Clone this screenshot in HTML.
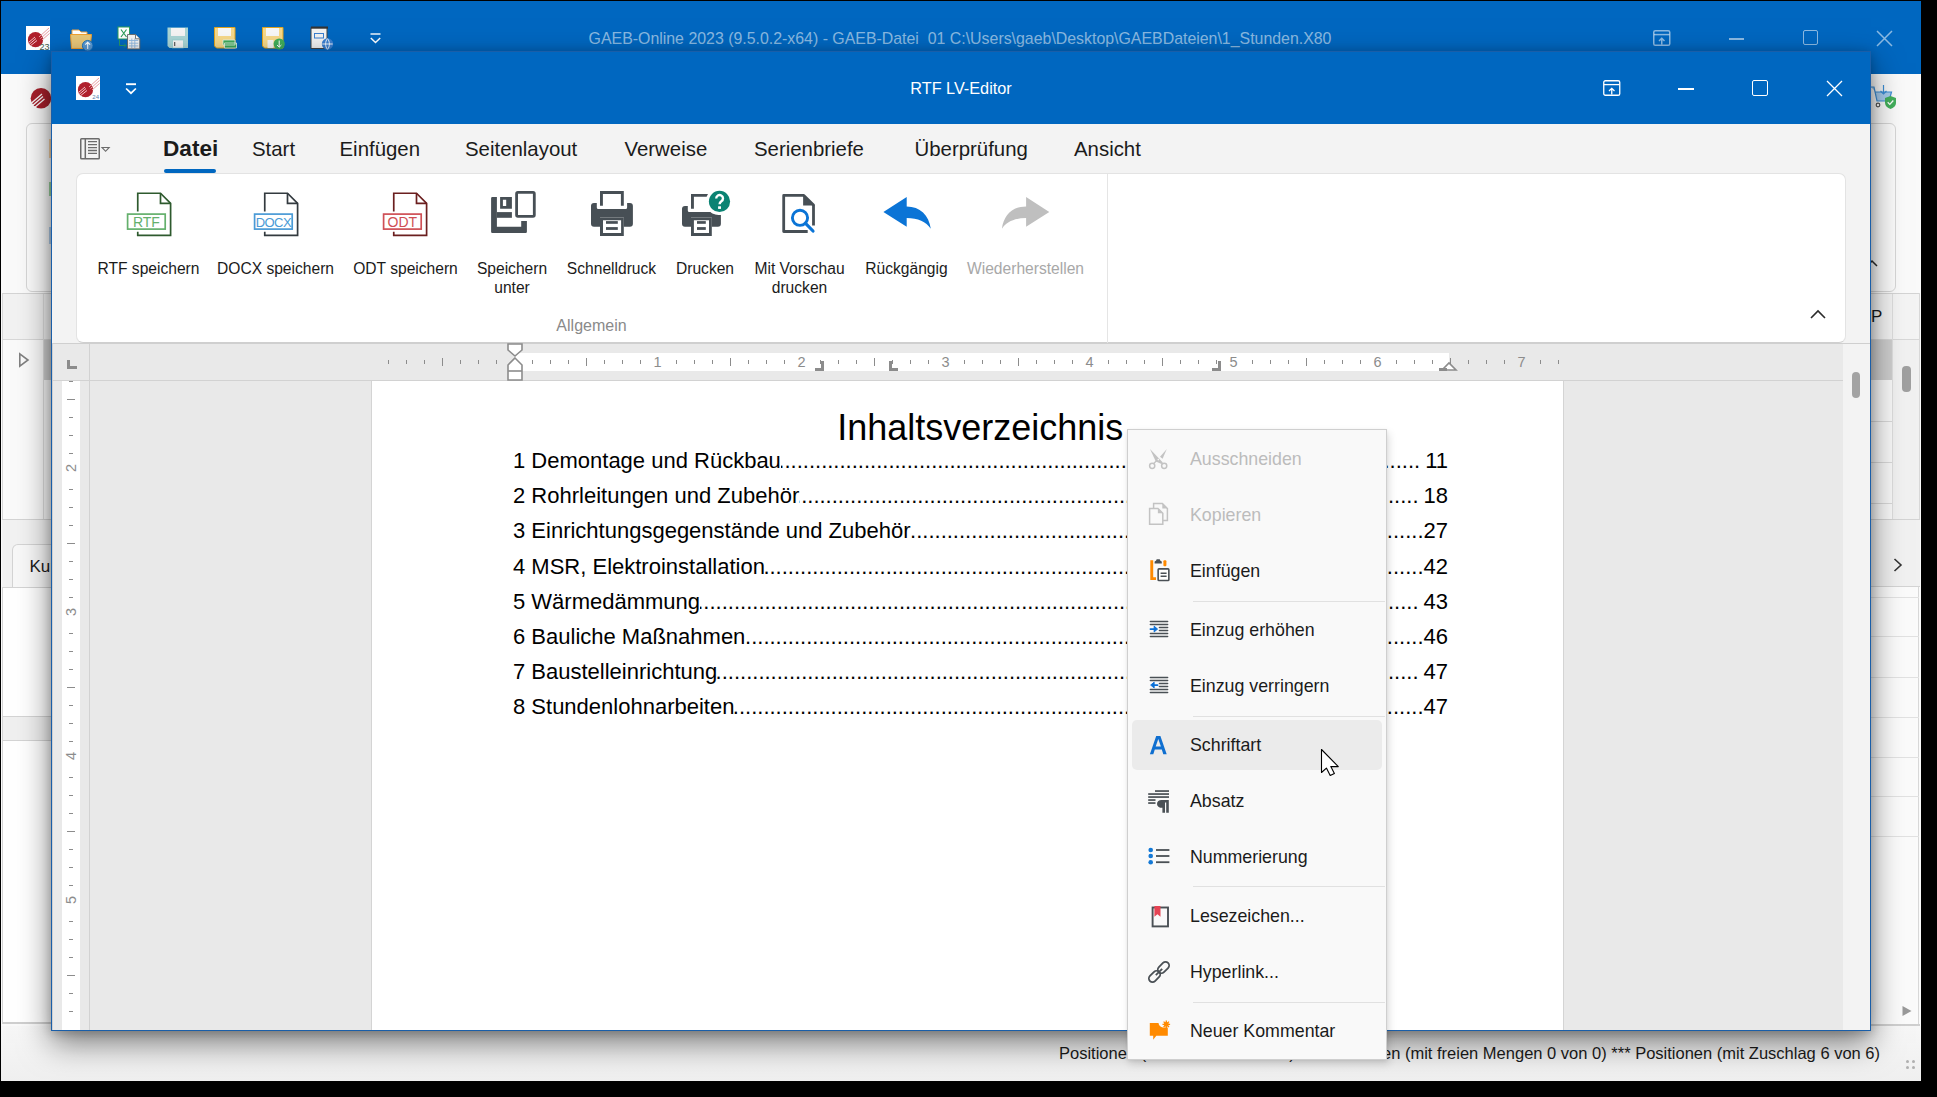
<!DOCTYPE html>
<html><head><meta charset="utf-8">
<style>
*{box-sizing:border-box}
html,body{margin:0;padding:0}
body{width:1937px;height:1097px;background:#000;position:relative;overflow:hidden;font-family:"Liberation Sans",sans-serif;color:#1b1b1b}
.a{position:absolute}
.t{position:absolute;white-space:nowrap}
svg{overflow:visible}
</style></head><body>
<div class="a" style="left:1px;top:1px;width:1920px;height:1080px;background:#fafafa"></div>
<div class="a" style="left:1px;top:1px;width:1920px;height:73px;background:#0067c0"></div>
<div class="t" style="left:810.7px;top:30.54px;font-size:15.9px;line-height:15.9px;color:rgba(255,255,255,0.55);width:300px;text-align:center;width:900px;left:510px">GAEB-Online 2023 (9.5.0.2-x64) - GAEB-Datei  01 C:\Users\gaeb\Desktop\GAEBDateien\1_Stunden.X80</div>
<svg class="a" style="left:26px;top:26px;" width="24" height="24" viewBox="0 0 24 24"><rect width="24" height="24" fill="#fff"/><circle cx="9.5" cy="13.7" r="7.6" fill="#b0202c"/><path d="M13 11L23 2M14.5 12.5L23.5 4.5M16 14L23.5 7.5" stroke="#e8a0a6" stroke-width="1"/><path d="M2.5 16.5L9 11M3 18.5L10 12.5M4.5 19.7L11 14.5" stroke="#f1c4c8" stroke-width="1"/><text x="23.5" y="23.5" text-anchor="end" font-family="Liberation Sans" font-size="9" fill="#3e5a4a">23</text></svg>
<svg class="a" style="left:69px;top:27px;" width="26" height="24" viewBox="0 0 26 24"><path d="M3 3H10L12 5H18V9H3Z" fill="#fff" stroke="#e9a34a" stroke-width="1"/><path d="M1.5 7.5H22.5L21 21.5H2.5Z" fill="#e8c77a" stroke="#f0a030" stroke-width="1"/><circle cx="18.7" cy="18.7" r="5.3" fill="#5b9bd5" stroke="#0067c0" stroke-width="0.8"/><path d="M18.7 22V15.3M16.3 17.7L18.7 15.3L21.1 17.7" fill="none" stroke="#fff" stroke-width="1.1"/></svg>
<svg class="a" style="left:117px;top:26px;" width="26" height="26" viewBox="0 0 26 26"><rect x="1" y="1" width="11.5" height="12" fill="#fff" stroke="#2e9e5a" stroke-width="1"/><path d="M4 3.5L9.5 11M9.5 3.5L4 11" stroke="#2e9e5a" stroke-width="1.2"/><path d="M10.5 8.5H18.5L22.8 12.8V22.9H10.5Z" fill="#f4f4f4" stroke="#666" stroke-width="0.9"/><path d="M18.5 8.5V12.8H22.8" fill="#fff" stroke="#555" stroke-width="0.8"/><path d="M12 14.5H21.3M12 17.2H21.3M12 19.9H21.3M14.8 12.5V22M17.8 12.5V22" stroke="#8fb8e0" stroke-width="0.9"/><path d="M2.5 13.5V19.5H8.5M7 17.5L9 19.5L7 21.5" fill="none" stroke="#2e9e5a" stroke-width="0.9"/></svg>
<svg class="a" style="left:167px;top:27px;" width="22" height="22" viewBox="0 0 22 22"><path d="M0.5 0.5H21V21L19 21H2.5L0.5 19Z" fill="#a9d5d5"/><rect x="4" y="1" width="14" height="8" fill="#f4f4f4"/><rect x="5.5" y="13" width="11" height="8" fill="#f4f4f4" stroke="#8cc" stroke-width="0.6"/><rect x="7" y="15" width="1.3" height="4" fill="#666"/></svg>
<svg class="a" style="left:214px;top:27px;" width="24" height="23" viewBox="0 0 24 23"><path d="M0.5 0.5H21V21L19 21H2.5L0.5 19Z" fill="#f7d98a" stroke="#e0a420" stroke-width="1"/><rect x="4" y="1" width="13" height="8" fill="#f8f8f8"/><path d="M9 13H21V18H9Z M10.5 16H22.5V21H10.5Z" fill="#3fa95a" stroke="#e8f8e8" stroke-width="0.8"/></svg>
<svg class="a" style="left:262px;top:27px;" width="24" height="23" viewBox="0 0 24 23"><path d="M0.5 0.5H21V21L19 21H2.5L0.5 19Z" fill="#f7d98a" stroke="#e0a420" stroke-width="1"/><rect x="4" y="1" width="13" height="8" fill="#f8f8f8"/><rect x="5.5" y="13" width="6" height="8" fill="#f4f4f4"/><circle cx="17.2" cy="17" r="5.6" fill="#3fae5a"/><path d="M17.2 13.5V20.2M15 18L17.2 20.2L19.4 18" fill="none" stroke="#fff" stroke-width="1"/></svg>
<svg class="a" style="left:310px;top:26px;" width="24" height="24" viewBox="0 0 24 24"><path d="M1 1.5H17V22.5H1Z" fill="#f2f2f2" stroke="#444" stroke-width="1"/><rect x="1" y="0.5" width="17" height="2.2" fill="#333"/><rect x="4.5" y="7.5" width="9" height="4.5" fill="none" stroke="#3a7fd0" stroke-width="1"/><circle cx="17.5" cy="18" r="5.7" fill="#3a7fd0"/><path d="M12.3 18H22.7M17.5 12.7C15 15 15 21 17.5 23.3C20 21 20 15 17.5 12.7Z" fill="none" stroke="#fff" stroke-width="0.9"/></svg>
<svg class="a" style="left:370px;top:33px;" width="11" height="11" viewBox="0 0 11 11"><path d="M0.5 1H10.5" stroke="#fff" stroke-width="1.4"/><path d="M0.8 5L5.5 9.5L10.2 5" fill="none" stroke="#fff" stroke-width="1.5"/></svg>
<svg class="a" style="left:1652.5px;top:30px;" width="18" height="16" viewBox="0 0 18 16"><rect x="0.75" y="0.75" width="16" height="14.5" rx="1.6" fill="none" stroke="rgba(255,255,255,0.55)" stroke-width="1.5"/><line x1="1" y1="4.6" x2="16.5" y2="4.6" stroke="rgba(255,255,255,0.55)" stroke-width="1.5"/><path d="M8.75 14.5V8.3M6 11L8.75 8.3L11.5 11" fill="none" stroke="rgba(255,255,255,0.55)" stroke-width="1.5"/></svg>
<div class="a" style="left:1729px;top:38px;width:15px;height:1.5px;background:rgba(255,255,255,0.55)"></div>
<div class="a" style="left:1803px;top:30px;width:15px;height:15px;border:1.5px solid rgba(255,255,255,0.55);border-radius:2px"></div>
<svg class="a" style="left:1876px;top:30px;" width="17" height="17" viewBox="0 0 17 17"><path d="M1 1L16 16M16 1L1 16" stroke="rgba(255,255,255,0.55)" stroke-width="1.5"/></svg>
<div class="a" style="left:1px;top:1026px;width:1920px;height:55px;background:linear-gradient(#f7f7f7,#efefef)"></div>
<div class="a" style="left:26px;top:123px;width:60px;height:169px;background:#fbfbfb;border:1px solid #d6d6d6;border-radius:6px"></div>
<svg class="a" style="left:30px;top:85px;" width="22" height="26" viewBox="0 0 22 26"><circle cx="11" cy="13.3" r="10.3" fill="#a8202c"/><path d="M1.5 18L12 9M2.5 20.5L13 11.5M4.5 22.5L14.5 14" stroke="#fff" stroke-width="1.3"/></svg>
<div class="a" style="left:49px;top:139px;width:2px;height:19px;background:#f0b060;opacity:.55"></div>
<div class="a" style="left:49px;top:182px;width:2px;height:14px;background:#5cb860;opacity:.6"></div>
<div class="a" style="left:49px;top:227px;width:2px;height:17px;background:#5a9ad8;opacity:.45"></div>
<div class="a" style="left:2px;top:293px;width:60px;height:1px;background:#d4d4d4"></div>
<div class="a" style="left:2px;top:294px;width:60px;height:45px;background:#f2f2f2"></div>
<div class="a" style="left:2px;top:339px;width:60px;height:1px;background:#d8d8d8"></div>
<div class="a" style="left:43px;top:294px;width:1px;height:225px;background:#dedede"></div>
<div class="a" style="left:44px;top:340px;width:10px;height:40px;background:#d0d0d0"></div>
<div class="a" style="left:2px;top:519px;width:60px;height:1px;background:#d4d4d4"></div>
<div class="a" style="left:2px;top:294px;width:1px;height:225px;background:#d8d8d8"></div>
<svg class="a" style="left:18px;top:352px;" width="12" height="16" viewBox="0 0 12 16"><path d="M1.8 1.8L10 8L1.8 14.2Z" fill="none" stroke="#808080" stroke-width="1.6"/></svg>
<div class="a" style="left:2px;top:520px;width:60px;height:67px;background:#f2f2f2"></div>
<div class="a" style="left:12px;top:544px;width:60px;height:43px;background:#f8f8f8;border:1px solid #d4d4d4;border-bottom:none;border-radius:6px 6px 0 0"></div>
<div class="t" style="left:29.5px;top:557.61px;font-size:17px;line-height:17px;color:#1b1b1b;">Kur</div>
<div class="a" style="left:2px;top:587px;width:60px;height:129px;background:#fff;border-left:1px solid #d4d4d4;border-top:1px solid #d4d4d4"></div>
<div class="a" style="left:2px;top:716px;width:60px;height:25px;background:#f0f0f0;border-top:1px solid #d4d4d4;border-bottom:1px solid #d4d4d4;border-left:1px solid #d4d4d4"></div>
<div class="a" style="left:2px;top:741px;width:60px;height:283px;background:#fff;border-left:1px solid #d4d4d4;border-bottom:2px solid #cfcfcf"></div>
<svg class="a" style="left:1870px;top:84px;" width="28" height="28" viewBox="0 0 28 28"><path d="M1 3H4L7 17H19L21.5 8H5.5" fill="#a8cdee" stroke="#3d8fd6" stroke-width="1.2"/><circle cx="8" cy="21" r="1.8" fill="none" stroke="#555" stroke-width="1.2"/><path d="M13.5 1V10M10.5 7L13.5 10L16.5 7" fill="none" stroke="#3d8fd6" stroke-width="1.2"/><path d="M20.5 12L26 14V19C26 22 23.5 24 20.5 25C17.5 24 15 22 15 19V14Z" fill="#43b05c"/><path d="M17.7 18.3L19.8 20.4L23.3 16.5" fill="none" stroke="#fff" stroke-width="1.3"/></svg>
<div class="a" style="left:1840px;top:123px;width:56px;height:169px;background:#fbfbfb;border:1px solid #d6d6d6;border-radius:6px"></div>
<svg class="a" style="left:1866px;top:258px;" width="12" height="10" viewBox="0 0 12 10"><path d="M1 8L6 3L11 8" fill="none" stroke="#2b2b2b" stroke-width="1.5"/></svg>
<div class="a" style="left:1840px;top:293px;width:80px;height:1px;background:#d4d4d4"></div>
<div class="a" style="left:1840px;top:294px;width:79px;height:45px;background:#f4f4f4"></div>
<div class="a" style="left:1840px;top:339px;width:79px;height:1px;background:#d8d8d8"></div>
<div class="a" style="left:1892px;top:294px;width:1px;height:225px;background:#dedede"></div>
<div class="a" style="left:1919px;top:293px;width:1px;height:226px;background:#d8d8d8"></div>
<div class="a" style="left:1860px;top:340px;width:32px;height:40px;background:#cfcfcf"></div>
<div class="t" style="left:1871px;top:307.61px;font-size:17px;line-height:17px;color:#1b1b1b;">P</div>
<div class="a" style="left:1893px;top:340px;width:26px;height:179px;background:#f1f1f1"></div>
<div class="a" style="left:1902px;top:366px;width:9px;height:26px;background:#a0a0a0;border-radius:4px"></div>
<div class="a" style="left:1860px;top:421px;width:32px;height:1px;background:#dadada"></div>
<div class="a" style="left:1860px;top:462px;width:32px;height:1px;background:#dadada"></div>
<div class="a" style="left:1860px;top:503px;width:32px;height:1px;background:#dadada"></div>
<div class="a" style="left:1840px;top:519px;width:80px;height:1px;background:#d4d4d4"></div>
<div class="a" style="left:1840px;top:520px;width:80px;height:66px;background:#f1f1f1"></div>
<svg class="a" style="left:1893px;top:558px;" width="10" height="14" viewBox="0 0 10 14"><path d="M1.5 1L8 7L1.5 13" fill="none" stroke="#333" stroke-width="1.6"/></svg>
<div class="a" style="left:1840px;top:586px;width:80px;height:1px;background:#d4d4d4"></div>
<div class="a" style="left:1840px;top:587px;width:79px;height:437px;background:#fbfbfb;border-right:1px solid #d8d8d8"></div>
<div class="a" style="left:1860px;top:597px;width:59px;height:1px;background:#e2e2e2"></div>
<div class="a" style="left:1860px;top:636px;width:59px;height:1px;background:#e2e2e2"></div>
<div class="a" style="left:1860px;top:677px;width:59px;height:1px;background:#e2e2e2"></div>
<div class="a" style="left:1860px;top:717px;width:59px;height:1px;background:#e2e2e2"></div>
<div class="a" style="left:1860px;top:757px;width:59px;height:1px;background:#e2e2e2"></div>
<div class="a" style="left:1860px;top:796px;width:59px;height:1px;background:#e2e2e2"></div>
<div class="a" style="left:1860px;top:836px;width:59px;height:1px;background:#e2e2e2"></div>
<svg class="a" style="left:1901px;top:1005px;" width="12" height="12" viewBox="0 0 12 12"><path d="M1.5 1L10.5 6L1.5 11Z" fill="#9a9a9a"/></svg>
<div class="a" style="left:1840px;top:1024px;width:80px;height:2px;background:#cfcfcf"></div>
<div class="a" style="left:1905.5px;top:1059.5px;width:3px;height:3px;background:#b0b0b0;border-radius:50%"></div>
<div class="a" style="left:1905.5px;top:1065.5px;width:3px;height:3px;background:#b0b0b0;border-radius:50%"></div>
<div class="a" style="left:1911.5px;top:1059.5px;width:3px;height:3px;background:#b0b0b0;border-radius:50%"></div>
<div class="a" style="left:1911.5px;top:1065.5px;width:3px;height:3px;background:#b0b0b0;border-radius:50%"></div>
<div class="t" style="left:1059px;top:1045.03px;font-size:16.5px;line-height:16.5px;color:#1b1b1b;">Positionen (mit</div>
<div class="t" style="left:1180px;top:1045.03px;font-size:16.5px;line-height:16.5px;color:#1b1b1b;width:700px;height:22px;display:flex;justify-content:flex-end;overflow:hidden"><span>6 von 6) *** Positionen (mit freien Mengen 0 von 0) *** Positionen (mit Zuschlag 6 von 6)</span></div>
<div class="a" style="left:51px;top:51px;width:1820px;height:980px;background:#f3f3f3;border:1px solid #1a5ea8;box-shadow:0 12px 30px rgba(0,0,0,.5),0 2px 10px rgba(0,0,0,.2)"></div>
<div class="a" style="left:52px;top:52px;width:1818px;height:72px;background:#0067c0"></div>
<div class="t" style="left:811.0px;top:79.84px;font-size:16.25px;line-height:16.25px;color:#ffffff;width:300px;text-align:center;">RTF LV-Editor</div>
<svg class="a" style="left:76px;top:76px;" width="24" height="24" viewBox="0 0 24 24"><rect width="24" height="24" fill="#fff"/><circle cx="9.5" cy="13.7" r="7.6" fill="#b0202c"/><path d="M13 11L23 2M14.5 12.5L23.5 4.5M16 14L23.5 7.5" stroke="#e8a0a6" stroke-width="1"/><path d="M2.5 16.5L9 11M3 18.5L10 12.5M4.5 19.7L11 14.5" stroke="#f1c4c8" stroke-width="1"/><text x="23" y="23" text-anchor="end" font-family="Liberation Sans" font-size="6" fill="#5a7fae">24</text></svg>
<svg class="a" style="left:125px;top:82px;" width="12" height="13" viewBox="0 0 12 13"><path d="M1 2.2H11" stroke="#fff" stroke-width="1.9"/><path d="M1.1 6.5L6 11.2L10.9 6.5" fill="none" stroke="#fff" stroke-width="1.7"/></svg>
<svg class="a" style="left:1602.5px;top:80px;" width="18" height="16" viewBox="0 0 18 16"><rect x="0.75" y="0.75" width="16" height="14.5" rx="1.6" fill="none" stroke="#ffffff" stroke-width="1.3"/><line x1="1" y1="4.6" x2="16.5" y2="4.6" stroke="#ffffff" stroke-width="1.3"/><path d="M8.75 14.5V8.3M6 11L8.75 8.3L11.5 11" fill="none" stroke="#ffffff" stroke-width="1.3"/></svg>
<div class="a" style="left:1678px;top:88px;width:16px;height:1.5px;background:#ffffff"></div>
<div class="a" style="left:1752px;top:80px;width:16px;height:16px;border:1.3px solid #ffffff;border-radius:2px"></div>
<svg class="a" style="left:1826px;top:80px;" width="17" height="17" viewBox="0 0 17 17"><path d="M1 1L16 16M16 1L1 16" stroke="#ffffff" stroke-width="1.3"/></svg>
<div class="t" style="left:163px;top:137.87px;font-size:22.6px;line-height:22.6px;color:#1b1b1b;font-weight:bold;">Datei</div>
<div class="t" style="left:252px;top:139.13px;font-size:20.4px;line-height:20.4px;color:#1b1b1b;">Start</div>
<div class="t" style="left:339.5px;top:139.13px;font-size:20.4px;line-height:20.4px;color:#1b1b1b;">Einfügen</div>
<div class="t" style="left:465px;top:139.13px;font-size:20.4px;line-height:20.4px;color:#1b1b1b;">Seitenlayout</div>
<div class="t" style="left:624.5px;top:139.13px;font-size:20.4px;line-height:20.4px;color:#1b1b1b;">Verweise</div>
<div class="t" style="left:754px;top:139.13px;font-size:20.4px;line-height:20.4px;color:#1b1b1b;">Serienbriefe</div>
<div class="t" style="left:914.5px;top:139.13px;font-size:20.4px;line-height:20.4px;color:#1b1b1b;">Überprüfung</div>
<div class="t" style="left:1074px;top:139.13px;font-size:20.4px;line-height:20.4px;color:#1b1b1b;">Ansicht</div>
<div class="a" style="left:163.5px;top:169px;width:52.5px;height:4px;background:#0067c0;border-radius:2px"></div>
<div class="a" style="left:76px;top:173px;width:1770px;height:170px;background:#fff;border:1px solid #e3e3e3;border-radius:7px;border-bottom:1px solid #cfcfcf"></div>
<div class="a" style="left:1107px;top:174px;width:1px;height:169px;background:#e5e5e5"></div>
<div class="t" style="left:441.5px;top:318.46px;font-size:16px;line-height:16px;color:#8a8a8a;width:300px;text-align:center;">Allgemein</div>
<div class="t" style="left:-1.5px;top:260.79px;font-size:15.6px;line-height:15.6px;color:#1b1b1b;width:300px;text-align:center;">RTF speichern</div>
<div class="t" style="left:125.5px;top:260.79px;font-size:15.6px;line-height:15.6px;color:#1b1b1b;width:300px;text-align:center;">DOCX speichern</div>
<div class="t" style="left:255.5px;top:260.79px;font-size:15.6px;line-height:15.6px;color:#1b1b1b;width:300px;text-align:center;">ODT speichern</div>
<div class="t" style="left:362.0px;top:260.79px;font-size:15.6px;line-height:15.6px;color:#1b1b1b;width:300px;text-align:center;">Speichern</div>
<div class="t" style="left:362.0px;top:279.79px;font-size:15.6px;line-height:15.6px;color:#1b1b1b;width:300px;text-align:center;">unter</div>
<div class="t" style="left:461.5px;top:260.79px;font-size:15.6px;line-height:15.6px;color:#1b1b1b;width:300px;text-align:center;">Schnelldruck</div>
<div class="t" style="left:555.0px;top:260.79px;font-size:15.6px;line-height:15.6px;color:#1b1b1b;width:300px;text-align:center;">Drucken</div>
<div class="t" style="left:649.5px;top:260.79px;font-size:15.6px;line-height:15.6px;color:#1b1b1b;width:300px;text-align:center;">Mit Vorschau</div>
<div class="t" style="left:649.5px;top:279.79px;font-size:15.6px;line-height:15.6px;color:#1b1b1b;width:300px;text-align:center;">drucken</div>
<div class="t" style="left:756.5px;top:260.79px;font-size:15.6px;line-height:15.6px;color:#1b1b1b;width:300px;text-align:center;">Rückgängig</div>
<div class="t" style="left:875.5px;top:260.79px;font-size:15.6px;line-height:15.6px;color:#a8a8a8;width:300px;text-align:center;">Wiederherstellen</div>
<svg class="a" style="left:120.5px;top:185px;" width="52" height="52" viewBox="0 0 52 52"><path d="M16.75 26.5V8.25H39.5L49.6 18.4V50.4H16.75V46.8" fill="none" stroke="#2e5a2e" stroke-width="1.7" stroke-linejoin="miter"/><path d="M39.5 8.25V18.4H49.6" fill="none" stroke="#2e5a2e" stroke-width="1.7"/><rect x="6.6" y="29.1" width="37.6" height="15" fill="#fff" stroke="#64b06c" stroke-width="1.7"/><text x="25.4" y="41.5" text-anchor="middle" font-family="Liberation Sans" font-size="14" fill="#64b06c" letter-spacing="0">RTF</text></svg>
<svg class="a" style="left:247.5px;top:185px;" width="52" height="52" viewBox="0 0 52 52"><path d="M16.75 26.5V8.25H39.5L49.6 18.4V50.4H16.75V46.8" fill="none" stroke="#333a3f" stroke-width="1.7" stroke-linejoin="miter"/><path d="M39.5 8.25V18.4H49.6" fill="none" stroke="#333a3f" stroke-width="1.7"/><rect x="6.6" y="29.1" width="37.6" height="15" fill="#fff" stroke="#4a9ad6" stroke-width="1.7"/><text x="25.4" y="41.5" text-anchor="middle" font-family="Liberation Sans" font-size="13" fill="#4a9ad6" letter-spacing="-0.6">DOCX</text></svg>
<svg class="a" style="left:376.5px;top:185px;" width="52" height="52" viewBox="0 0 52 52"><path d="M16.75 26.5V8.25H39.5L49.6 18.4V50.4H16.75V46.8" fill="none" stroke="#6b1f1f" stroke-width="1.7" stroke-linejoin="miter"/><path d="M39.5 8.25V18.4H49.6" fill="none" stroke="#6b1f1f" stroke-width="1.7"/><rect x="6.6" y="29.1" width="37.6" height="15" fill="#fff" stroke="#cf4f55" stroke-width="1.7"/><text x="25.4" y="41.5" text-anchor="middle" font-family="Liberation Sans" font-size="14" fill="#cf4f55" letter-spacing="0">ODT</text></svg>
<svg class="a" style="left:484px;top:185px;" width="52" height="52" viewBox="0 0 52 52"><path d="M7.1 13.2a1.2 1.2 0 0 1 1.2-1.2H12.9V41.8H37.2V36.1H42.9V46.7a1.2 1.2 0 0 1-1.2 1.2H8.3a1.2 1.2 0 0 1-1.2-1.2Z" fill="#474f55"/><rect x="12.9" y="27.1" width="15" height="5.7" fill="#474f55"/><path d="M16.1 12H27.9V23.8H16.1Z M18.9 14.8V21.1H22.2V14.8Z" fill="#474f55" fill-rule="evenodd"/><rect x="32.6" y="7.4" width="17.7" height="24" rx="1.3" fill="none" stroke="#474f55" stroke-width="2.8"/></svg>
<svg class="a" style="left:582px;top:185px;" width="52" height="52" viewBox="0 0 52 52"><path d="M18 20.8V6H41.8V20.8H38.9V8.9H20.9V20.8Z" fill="#474f55"/><path d="M12 18H14.8V22.5a1.5 1.5 0 0 0 1.5 1.5H43.6a1.5 1.5 0 0 0 1.5-1.5V18H47.9a3 3 0 0 1 3 3V38.8a3 3 0 0 1-3 3H41.8V32.5H18V41.8H12a3 3 0 0 1-3-3V21a3 3 0 0 1 3-3Z" fill="#474f55"/><path d="M18 32.5H41.8V50.9H18Z M21 35.3V48.1H39.1V35.3Z" fill="#474f55" fill-rule="evenodd"/><rect x="24" y="36.1" width="11.8" height="2.7" fill="#474f55"/><rect x="24" y="42.1" width="11.8" height="2.8" fill="#474f55"/></svg>
<svg class="a" style="left:676px;top:185px;" width="52" height="52" viewBox="0 0 52 52"><path d="M15 23.8V9H32L30.6 11.8H17.9V23.8Z" fill="#474f55"/><path d="M9 21H11.8V25.5a1.5 1.5 0 0 0 1.5 1.5H34.5C36.5 28.8 38.5 29.8 44.9 30V38.8a3 3 0 0 1-3 3H35.8V32.5H15V41.8H9a3 3 0 0 1-3-3V24a3 3 0 0 1 3-3Z" fill="#474f55"/><path d="M15 32.5H35.8V50.9H15Z M17.9 35.3V48.1H33V35.3Z" fill="#474f55" fill-rule="evenodd"/><rect x="21" y="36.1" width="8.8" height="2.7" fill="#474f55"/><rect x="21" y="42.1" width="8.8" height="2.8" fill="#474f55"/><circle cx="43.5" cy="16.4" r="10.6" fill="#0b8373"/><path d="M40.2 13.4a3.4 3.4 0 1 1 5.2 2.9c-1.3.9-1.8 1.6-1.8 3" fill="none" stroke="#fff" stroke-width="2.4"/><rect x="42.1" y="21.3" width="2.9" height="2.6" fill="#fff"/></svg>
<svg class="a" style="left:770px;top:185px;" width="52" height="52" viewBox="0 0 52 52"><path d="M37.7 46.5H13.7V10.4H33.8L43.5 20.1V40.5" fill="none" stroke="#474f55" stroke-width="2.8" stroke-linejoin="round"/><path d="M33.1 10.4V20.5H44.9Z" fill="#474f55"/><circle cx="30" cy="32.8" r="7.6" fill="none" stroke="#0a74d6" stroke-width="2.9"/><path d="M35.3 38.2L43 46" stroke="#0a74d6" stroke-width="3.2" stroke-linecap="round"/></svg>
<svg class="a" style="left:876px;top:185px;" width="180" height="52" viewBox="0 0 180 52"><path d="M7.4 27L30.7 12.1V21.4C44 21.4 53 30 54.8 43.7C50 36.5 42 33 30.7 33V41.8Z" fill="#0b74d6"/><path d="M173.3 27L150.1 12.1V21.4C136.8 21.4 127.8 30 125.9 43.7C130.8 36.5 138.8 33 150.1 33V41.8Z" fill="#bfbfbf"/></svg>
<svg class="a" style="left:80px;top:138px;" width="30" height="22" viewBox="0 0 30 22"><rect x="0.75" y="0.75" width="18.5" height="20" rx="0.8" fill="none" stroke="#6b6b6b" stroke-width="1.5"/><line x1="5.3" y1="1" x2="5.3" y2="21" stroke="#6b6b6b" stroke-width="1.5"/><path d="M8 3.7H17M8 6.6H17M8 9.6H17M8 12.5H17M8 15.4H17" stroke="#6b6b6b" stroke-width="1.3"/><path d="M22 9.5H29.2L25.6 13.3Z" fill="none" stroke="#6b6b6b" stroke-width="1.1"/></svg>
<svg class="a" style="left:1810px;top:309px;" width="17" height="10" viewBox="0 0 17 10"><path d="M1 9L8 2L15 9" fill="none" stroke="#2b2b2b" stroke-width="1.6"/></svg>
<div class="a" style="left:52px;top:343px;width:1818px;height:1px;background:#cfcfcf"></div>
<div class="a" style="left:52px;top:344px;width:1791px;height:686px;background:#e9e9e9"></div>
<div class="a" style="left:1843px;top:344px;width:27px;height:686px;background:#f3f3f3"></div>
<div class="a" style="left:52px;top:344px;width:1px;height:686px;background:#d0d0d0"></div>
<div class="a" style="left:53px;top:380px;width:1790px;height:1px;background:#d2d2d2"></div>
<div class="a" style="left:89px;top:344px;width:1px;height:686px;background:#d2d2d2"></div>
<div class="a" style="left:371px;top:381px;width:1193px;height:649px;background:#fff;border-left:1px solid #d4d4d4;border-right:1px solid #d4d4d4"></div>
<div class="t" style="left:830.3px;top:409.53px;font-size:36px;line-height:36px;color:#000;width:300px;text-align:center;">Inhaltsverzeichnis</div>
<div class="a" style="left:62px;top:381px;width:18px;height:649px;background:#fff"></div>
<div class="a" style="left:514px;top:353px;width:935px;height:18px;background:#fff"></div>
<div class="a" style="left:67px;top:360px;width:3px;height:9px;background:#8c8c8c"></div>
<div class="a" style="left:67px;top:366px;width:10px;height:3px;background:#8c8c8c"></div>
<div class="a" style="left:388px;top:360px;width:1px;height:4px;background:#8c8c8c"></div>
<div class="a" style="left:406px;top:360px;width:1px;height:4px;background:#8c8c8c"></div>
<div class="a" style="left:424px;top:360px;width:1px;height:4px;background:#8c8c8c"></div>
<div class="a" style="left:442px;top:358px;width:1px;height:8px;background:#8c8c8c"></div>
<div class="a" style="left:460px;top:360px;width:1px;height:4px;background:#8c8c8c"></div>
<div class="a" style="left:478px;top:360px;width:1px;height:4px;background:#8c8c8c"></div>
<div class="a" style="left:496px;top:360px;width:1px;height:4px;background:#8c8c8c"></div>
<div class="a" style="left:532px;top:360px;width:1px;height:4px;background:#8c8c8c"></div>
<div class="a" style="left:550px;top:360px;width:1px;height:4px;background:#8c8c8c"></div>
<div class="a" style="left:568px;top:360px;width:1px;height:4px;background:#8c8c8c"></div>
<div class="a" style="left:586px;top:358px;width:1px;height:8px;background:#8c8c8c"></div>
<div class="a" style="left:604px;top:360px;width:1px;height:4px;background:#8c8c8c"></div>
<div class="a" style="left:622px;top:360px;width:1px;height:4px;background:#8c8c8c"></div>
<div class="a" style="left:640px;top:360px;width:1px;height:4px;background:#8c8c8c"></div>
<div class="t" style="left:647.5px;top:354px;width:20px;text-align:center;font-size:14.5px;line-height:16px;color:#8c8c8c">1</div>
<div class="a" style="left:676px;top:360px;width:1px;height:4px;background:#8c8c8c"></div>
<div class="a" style="left:694px;top:360px;width:1px;height:4px;background:#8c8c8c"></div>
<div class="a" style="left:712px;top:360px;width:1px;height:4px;background:#8c8c8c"></div>
<div class="a" style="left:730px;top:358px;width:1px;height:8px;background:#8c8c8c"></div>
<div class="a" style="left:748px;top:360px;width:1px;height:4px;background:#8c8c8c"></div>
<div class="a" style="left:766px;top:360px;width:1px;height:4px;background:#8c8c8c"></div>
<div class="a" style="left:784px;top:360px;width:1px;height:4px;background:#8c8c8c"></div>
<div class="t" style="left:791.5px;top:354px;width:20px;text-align:center;font-size:14.5px;line-height:16px;color:#8c8c8c">2</div>
<div class="a" style="left:820px;top:360px;width:1px;height:4px;background:#8c8c8c"></div>
<div class="a" style="left:838px;top:360px;width:1px;height:4px;background:#8c8c8c"></div>
<div class="a" style="left:856px;top:360px;width:1px;height:4px;background:#8c8c8c"></div>
<div class="a" style="left:874px;top:358px;width:1px;height:8px;background:#8c8c8c"></div>
<div class="a" style="left:892px;top:360px;width:1px;height:4px;background:#8c8c8c"></div>
<div class="a" style="left:910px;top:360px;width:1px;height:4px;background:#8c8c8c"></div>
<div class="a" style="left:928px;top:360px;width:1px;height:4px;background:#8c8c8c"></div>
<div class="t" style="left:935.5px;top:354px;width:20px;text-align:center;font-size:14.5px;line-height:16px;color:#8c8c8c">3</div>
<div class="a" style="left:964px;top:360px;width:1px;height:4px;background:#8c8c8c"></div>
<div class="a" style="left:982px;top:360px;width:1px;height:4px;background:#8c8c8c"></div>
<div class="a" style="left:1000px;top:360px;width:1px;height:4px;background:#8c8c8c"></div>
<div class="a" style="left:1018px;top:358px;width:1px;height:8px;background:#8c8c8c"></div>
<div class="a" style="left:1036px;top:360px;width:1px;height:4px;background:#8c8c8c"></div>
<div class="a" style="left:1054px;top:360px;width:1px;height:4px;background:#8c8c8c"></div>
<div class="a" style="left:1072px;top:360px;width:1px;height:4px;background:#8c8c8c"></div>
<div class="t" style="left:1079.5px;top:354px;width:20px;text-align:center;font-size:14.5px;line-height:16px;color:#8c8c8c">4</div>
<div class="a" style="left:1108px;top:360px;width:1px;height:4px;background:#8c8c8c"></div>
<div class="a" style="left:1126px;top:360px;width:1px;height:4px;background:#8c8c8c"></div>
<div class="a" style="left:1144px;top:360px;width:1px;height:4px;background:#8c8c8c"></div>
<div class="a" style="left:1162px;top:358px;width:1px;height:8px;background:#8c8c8c"></div>
<div class="a" style="left:1180px;top:360px;width:1px;height:4px;background:#8c8c8c"></div>
<div class="a" style="left:1198px;top:360px;width:1px;height:4px;background:#8c8c8c"></div>
<div class="a" style="left:1216px;top:360px;width:1px;height:4px;background:#8c8c8c"></div>
<div class="t" style="left:1223.5px;top:354px;width:20px;text-align:center;font-size:14.5px;line-height:16px;color:#8c8c8c">5</div>
<div class="a" style="left:1252px;top:360px;width:1px;height:4px;background:#8c8c8c"></div>
<div class="a" style="left:1270px;top:360px;width:1px;height:4px;background:#8c8c8c"></div>
<div class="a" style="left:1288px;top:360px;width:1px;height:4px;background:#8c8c8c"></div>
<div class="a" style="left:1306px;top:358px;width:1px;height:8px;background:#8c8c8c"></div>
<div class="a" style="left:1324px;top:360px;width:1px;height:4px;background:#8c8c8c"></div>
<div class="a" style="left:1342px;top:360px;width:1px;height:4px;background:#8c8c8c"></div>
<div class="a" style="left:1360px;top:360px;width:1px;height:4px;background:#8c8c8c"></div>
<div class="t" style="left:1367.5px;top:354px;width:20px;text-align:center;font-size:14.5px;line-height:16px;color:#8c8c8c">6</div>
<div class="a" style="left:1396px;top:360px;width:1px;height:4px;background:#8c8c8c"></div>
<div class="a" style="left:1414px;top:360px;width:1px;height:4px;background:#8c8c8c"></div>
<div class="a" style="left:1432px;top:360px;width:1px;height:4px;background:#8c8c8c"></div>
<div class="a" style="left:1450px;top:358px;width:1px;height:8px;background:#8c8c8c"></div>
<div class="a" style="left:1468px;top:360px;width:1px;height:4px;background:#8c8c8c"></div>
<div class="a" style="left:1486px;top:360px;width:1px;height:4px;background:#8c8c8c"></div>
<div class="a" style="left:1504px;top:360px;width:1px;height:4px;background:#8c8c8c"></div>
<div class="t" style="left:1511.5px;top:354px;width:20px;text-align:center;font-size:14.5px;line-height:16px;color:#8c8c8c">7</div>
<div class="a" style="left:1540px;top:360px;width:1px;height:4px;background:#8c8c8c"></div>
<div class="a" style="left:1558px;top:360px;width:1px;height:4px;background:#8c8c8c"></div>
<div class="a" style="left:69px;top:381px;width:4px;height:1px;background:#8c8c8c"></div>
<div class="a" style="left:67px;top:399px;width:8px;height:1px;background:#8c8c8c"></div>
<div class="a" style="left:69px;top:417px;width:4px;height:1px;background:#8c8c8c"></div>
<div class="a" style="left:69px;top:435px;width:4px;height:1px;background:#8c8c8c"></div>
<div class="a" style="left:69px;top:453px;width:4px;height:1px;background:#8c8c8c"></div>
<div class="t" style="left:61px;top:459.5px;width:20px;height:16px;text-align:center;font-size:14.5px;line-height:16px;color:#8c8c8c;transform:rotate(-90deg)">2</div>
<div class="a" style="left:69px;top:489px;width:4px;height:1px;background:#8c8c8c"></div>
<div class="a" style="left:69px;top:507px;width:4px;height:1px;background:#8c8c8c"></div>
<div class="a" style="left:69px;top:525px;width:4px;height:1px;background:#8c8c8c"></div>
<div class="a" style="left:67px;top:543px;width:8px;height:1px;background:#8c8c8c"></div>
<div class="a" style="left:69px;top:561px;width:4px;height:1px;background:#8c8c8c"></div>
<div class="a" style="left:69px;top:579px;width:4px;height:1px;background:#8c8c8c"></div>
<div class="a" style="left:69px;top:597px;width:4px;height:1px;background:#8c8c8c"></div>
<div class="t" style="left:61px;top:603.5px;width:20px;height:16px;text-align:center;font-size:14.5px;line-height:16px;color:#8c8c8c;transform:rotate(-90deg)">3</div>
<div class="a" style="left:69px;top:633px;width:4px;height:1px;background:#8c8c8c"></div>
<div class="a" style="left:69px;top:651px;width:4px;height:1px;background:#8c8c8c"></div>
<div class="a" style="left:69px;top:669px;width:4px;height:1px;background:#8c8c8c"></div>
<div class="a" style="left:67px;top:687px;width:8px;height:1px;background:#8c8c8c"></div>
<div class="a" style="left:69px;top:705px;width:4px;height:1px;background:#8c8c8c"></div>
<div class="a" style="left:69px;top:723px;width:4px;height:1px;background:#8c8c8c"></div>
<div class="a" style="left:69px;top:741px;width:4px;height:1px;background:#8c8c8c"></div>
<div class="t" style="left:61px;top:747.5px;width:20px;height:16px;text-align:center;font-size:14.5px;line-height:16px;color:#8c8c8c;transform:rotate(-90deg)">4</div>
<div class="a" style="left:69px;top:777px;width:4px;height:1px;background:#8c8c8c"></div>
<div class="a" style="left:69px;top:795px;width:4px;height:1px;background:#8c8c8c"></div>
<div class="a" style="left:69px;top:813px;width:4px;height:1px;background:#8c8c8c"></div>
<div class="a" style="left:67px;top:831px;width:8px;height:1px;background:#8c8c8c"></div>
<div class="a" style="left:69px;top:849px;width:4px;height:1px;background:#8c8c8c"></div>
<div class="a" style="left:69px;top:867px;width:4px;height:1px;background:#8c8c8c"></div>
<div class="a" style="left:69px;top:885px;width:4px;height:1px;background:#8c8c8c"></div>
<div class="t" style="left:61px;top:891.5px;width:20px;height:16px;text-align:center;font-size:14.5px;line-height:16px;color:#8c8c8c;transform:rotate(-90deg)">5</div>
<div class="a" style="left:69px;top:921px;width:4px;height:1px;background:#8c8c8c"></div>
<div class="a" style="left:69px;top:939px;width:4px;height:1px;background:#8c8c8c"></div>
<div class="a" style="left:69px;top:957px;width:4px;height:1px;background:#8c8c8c"></div>
<div class="a" style="left:67px;top:975px;width:8px;height:1px;background:#8c8c8c"></div>
<div class="a" style="left:69px;top:993px;width:4px;height:1px;background:#8c8c8c"></div>
<div class="a" style="left:69px;top:1011px;width:4px;height:1px;background:#8c8c8c"></div>
<svg class="a" style="left:507px;top:343px;" width="16" height="38" viewBox="0 0 16 38"><path d="M1 1H15V7L8 13L1 7Z" fill="#fff" stroke="#8c8c8c" stroke-width="1.6"/><path d="M8 15L15 22V37H1V22Z" fill="#fff" stroke="#8c8c8c" stroke-width="1.6"/><line x1="1" y1="28" x2="15" y2="28" stroke="#8c8c8c" stroke-width="1.6"/></svg>
<svg class="a" style="left:1439px;top:357px;" width="19" height="15" viewBox="0 0 19 15"><path d="M3 13L10 6L17 13Z" fill="#fff" stroke="#8c8c8c" stroke-width="1.6"/><rect x="0" y="11" width="8" height="3" fill="#8c8c8c"/></svg>
<div class="a" style="left:821px;top:361px;width:3px;height:10px;background:#8c8c8c"></div>
<div class="a" style="left:815px;top:368px;width:9px;height:3px;background:#8c8c8c"></div>
<div class="a" style="left:889px;top:361px;width:3px;height:10px;background:#8c8c8c"></div>
<div class="a" style="left:889px;top:368px;width:9px;height:3px;background:#8c8c8c"></div>
<div class="a" style="left:1218px;top:361px;width:3px;height:10px;background:#8c8c8c"></div>
<div class="a" style="left:1212px;top:368px;width:9px;height:3px;background:#8c8c8c"></div>
<div class="a" style="left:1852px;top:372px;width:8px;height:26px;background:#a3a3a3;border-radius:4px"></div>
<div class="t" style="left:513px;top:449.78px;width:935px;font-size:22px;line-height:22px;color:#000;display:flex"><span>1 Demontage und Rückbau</span><span style="flex:1;overflow:hidden;direction:rtl;white-space:nowrap;margin-right:5px">........................................................................................................................................................................................................</span><span>11</span></div>
<div class="t" style="left:513px;top:485.02px;width:935px;font-size:22px;line-height:22px;color:#000;display:flex"><span>2 Rohrleitungen und Zubehör</span><span style="flex:1;overflow:hidden;direction:rtl;white-space:nowrap;margin-right:5px">........................................................................................................................................................................................................</span><span>18</span></div>
<div class="t" style="left:513px;top:520.26px;width:935px;font-size:22px;line-height:22px;color:#000;display:flex"><span>3 Einrichtungsgegenstände und Zubehör</span><span style="flex:1;overflow:hidden;direction:rtl;white-space:nowrap;margin-right:0px">........................................................................................................................................................................................................</span><span>27</span></div>
<div class="t" style="left:513px;top:555.50px;width:935px;font-size:22px;line-height:22px;color:#000;display:flex"><span>4 MSR, Elektroinstallation</span><span style="flex:1;overflow:hidden;direction:rtl;white-space:nowrap;margin-right:0px">........................................................................................................................................................................................................</span><span>42</span></div>
<div class="t" style="left:513px;top:590.74px;width:935px;font-size:22px;line-height:22px;color:#000;display:flex"><span>5 Wärmedämmung</span><span style="flex:1;overflow:hidden;direction:rtl;white-space:nowrap;margin-right:5px">........................................................................................................................................................................................................</span><span>43</span></div>
<div class="t" style="left:513px;top:625.98px;width:935px;font-size:22px;line-height:22px;color:#000;display:flex"><span>6 Bauliche Maßnahmen</span><span style="flex:1;overflow:hidden;direction:rtl;white-space:nowrap;margin-right:0px">........................................................................................................................................................................................................</span><span>46</span></div>
<div class="t" style="left:513px;top:661.22px;width:935px;font-size:22px;line-height:22px;color:#000;display:flex"><span>7 Baustelleinrichtung</span><span style="flex:1;overflow:hidden;direction:rtl;white-space:nowrap;margin-right:5px">........................................................................................................................................................................................................</span><span>47</span></div>
<div class="t" style="left:513px;top:696.46px;width:935px;font-size:22px;line-height:22px;color:#000;display:flex"><span>8 Stundenlohnarbeiten</span><span style="flex:1;overflow:hidden;direction:rtl;white-space:nowrap;margin-right:0px">........................................................................................................................................................................................................</span><span>47</span></div>
<div class="a" style="left:1127px;top:429px;width:260px;height:631px;background:#f9f9f9;border:1px solid #cfcfcf;box-shadow:2px 4px 8px rgba(0,0,0,.13),0 1px 3px rgba(0,0,0,.06)"></div>
<div class="a" style="left:1132px;top:720px;width:250px;height:50px;background:#ebebeb;border-radius:5px"></div>
<div class="t" style="left:1190px;top:450.93px;font-size:17.8px;line-height:17.8px;color:#bcbcbc;">Ausschneiden</div>
<div class="t" style="left:1190px;top:506.93px;font-size:17.8px;line-height:17.8px;color:#bcbcbc;">Kopieren</div>
<div class="t" style="left:1190px;top:562.93px;font-size:17.8px;line-height:17.8px;color:#1b1b1b;">Einfügen</div>
<div class="t" style="left:1190px;top:621.93px;font-size:17.8px;line-height:17.8px;color:#1b1b1b;">Einzug erhöhen</div>
<div class="t" style="left:1190px;top:677.93px;font-size:17.8px;line-height:17.8px;color:#1b1b1b;">Einzug verringern</div>
<div class="t" style="left:1190px;top:736.93px;font-size:17.8px;line-height:17.8px;color:#1b1b1b;">Schriftart</div>
<div class="t" style="left:1190px;top:792.93px;font-size:17.8px;line-height:17.8px;color:#1b1b1b;">Absatz</div>
<div class="t" style="left:1190px;top:848.93px;font-size:17.8px;line-height:17.8px;color:#1b1b1b;">Nummerierung</div>
<div class="t" style="left:1190px;top:907.93px;font-size:17.8px;line-height:17.8px;color:#1b1b1b;">Lesezeichen...</div>
<div class="t" style="left:1190px;top:963.93px;font-size:17.8px;line-height:17.8px;color:#1b1b1b;">Hyperlink...</div>
<div class="t" style="left:1190px;top:1022.93px;font-size:17.8px;line-height:17.8px;color:#1b1b1b;">Neuer Kommentar</div>
<svg class="a" style="left:1146px;top:447px;" width="26" height="26" viewBox="0 0 26 26"><circle cx="6.2" cy="18.8" r="2.6" fill="none" stroke="#c3c3c3" stroke-width="1.5"/><circle cx="18.2" cy="18.8" r="2.6" fill="none" stroke="#c3c3c3" stroke-width="1.5"/><path d="M4 2L16.8 15.6L15.6 17L9.8 14.5Z" fill="#c3c3c3"/><circle cx="12.3" cy="12.6" r="0.8" fill="#f9f9f9"/><path d="M20.8 2L16.6 11.8L14 9.8Z" fill="#c3c3c3"/><path d="M7.8 16.4L10.5 13.8" stroke="#c3c3c3" stroke-width="1.4"/></svg>
<svg class="a" style="left:1146px;top:500px;" width="26" height="28" viewBox="0 0 26 28"><path d="M7.6 8.3V3.5H16.4L21.4 8.5V20.5H16.8" fill="none" stroke="#c3c3c3" stroke-width="1.5"/><path d="M16.3 3.5V8.4H21.4Z" fill="#c3c3c3"/><path d="M3.6 8.4H11.9L16.8 13.3V24.3H3.6Z" fill="#f9f9f9" stroke="#c3c3c3" stroke-width="1.5"/><path d="M11.9 8.4V13.3H16.8Z" fill="#c3c3c3"/></svg>
<svg class="a" style="left:1146px;top:556px;" width="26" height="28" viewBox="0 0 26 28"><path d="M4.3 4.3H7.2V21.3H10V24H4.3Z" fill="#ff8a00"/><rect x="17.4" y="4.3" width="3" height="6" rx="1" fill="#ff8a00"/><path d="M8.6 7.4V6.2C8.6 5.3 9.2 4.9 10 4.8L10.7 3.2H13.7L14.4 4.8C15.2 4.9 15.8 5.3 15.8 6.2V7.4Z" fill="#4a5055"/><rect x="12.15" y="12.85" width="10.7" height="11.7" rx="0.8" fill="#fff" stroke="#4a5055" stroke-width="1.6"/><path d="M14.6 17.2H20.6M14.6 20.2H20.6" stroke="#4a5055" stroke-width="1.6"/></svg>
<svg class="a" style="left:1146px;top:620px;" width="26" height="20" viewBox="0 0 26 20"><path d="M4.4 1.5H21.6" stroke="#4a5055" stroke-width="1.6" stroke-linecap="round"/><path d="M4.4 4.5H21.6" stroke="#4a5055" stroke-width="1.6" stroke-linecap="round"/><path d="M4.4 13.5H21.6" stroke="#4a5055" stroke-width="1.6" stroke-linecap="round"/><path d="M4.4 16.5H21.6" stroke="#4a5055" stroke-width="1.6" stroke-linecap="round"/><path d="M13.5 7.5H21.6" stroke="#4a5055" stroke-width="1.6" stroke-linecap="round"/><path d="M13.5 10.5H21.6" stroke="#4a5055" stroke-width="1.6" stroke-linecap="round"/><path d="M4.4 9.1H8.5" stroke="#0a6fd6" stroke-width="1.7" stroke-linecap="round"/><path d="M8.1 6.1L11.6 9.1L8.1 12Z" fill="#0a6fd6" stroke="#0a6fd6" stroke-width="0.8" stroke-linejoin="round"/></svg>
<svg class="a" style="left:1146px;top:676px;" width="26" height="20" viewBox="0 0 26 20"><path d="M4.4 1.5H21.6" stroke="#4a5055" stroke-width="1.6" stroke-linecap="round"/><path d="M4.4 4.5H21.6" stroke="#4a5055" stroke-width="1.6" stroke-linecap="round"/><path d="M4.4 13.5H21.6" stroke="#4a5055" stroke-width="1.6" stroke-linecap="round"/><path d="M4.4 16.5H21.6" stroke="#4a5055" stroke-width="1.6" stroke-linecap="round"/><path d="M13.5 7.5H21.6" stroke="#4a5055" stroke-width="1.6" stroke-linecap="round"/><path d="M13.5 10.5H21.6" stroke="#4a5055" stroke-width="1.6" stroke-linecap="round"/><path d="M8 9.1H11.6" stroke="#0a6fd6" stroke-width="1.7" stroke-linecap="round"/><path d="M8.2 6.1L4.6 9.1L8.2 12Z" fill="#0a6fd6" stroke="#0a6fd6" stroke-width="0.8" stroke-linejoin="round"/></svg>
<svg class="a" style="left:1146px;top:733px;" width="26" height="24" viewBox="0 0 26 24"><path d="M3.9 21.3L10.2 3H14.4L20.7 21.3H17.3L15.8 16.6H8.8L7.3 21.3Z M9.7 13.6H14.9L12.3 5.9Z" fill="#0f6fd0" fill-rule="evenodd"/></svg>
<svg class="a" style="left:1146px;top:788px;" width="26" height="28" viewBox="0 0 26 28"><rect x="9" y="2.2" width="14" height="1.7" fill="#4a5055"/><rect x="2.2" y="5.2" width="20.8" height="1.7" fill="#4a5055"/><rect x="2.2" y="8.2" width="20.8" height="1.7" fill="#4a5055"/><rect x="2.2" y="11.2" width="7.3" height="1.7" fill="#4a5055"/><rect x="2.2" y="14.2" width="7.3" height="1.7" fill="#4a5055"/><path d="M15.5 12H22.8V24.8H20.2V14.5H19V24.8H16.4V19.8C13 19.8 11 18.3 11 15.9S13 12 15.5 12Z" fill="#4a5055"/></svg>
<svg class="a" style="left:1146px;top:845px;" width="26" height="22" viewBox="0 0 26 22"><circle cx="4.7" cy="5" r="2.3" fill="#1479d6"/><circle cx="4.7" cy="11" r="2.3" fill="#1479d6"/><circle cx="4.7" cy="17.2" r="2.3" fill="#1479d6"/><rect x="10" y="4.1" width="13.4" height="1.8" fill="#4a5055"/><rect x="10" y="10.1" width="13.4" height="1.8" fill="#4a5055"/><rect x="10" y="16.3" width="13.4" height="1.8" fill="#4a5055"/></svg>
<svg class="a" style="left:1146px;top:903px;" width="26" height="28" viewBox="0 0 26 28"><rect x="6.6" y="4.5" width="15.4" height="18.9" fill="none" stroke="#4a5055" stroke-width="1.9"/><path d="M8.4 3H14.5V13.8L11.45 11.3L8.4 13.8Z" fill="#e54454"/></svg>
<svg class="a" style="left:1146px;top:959px;" width="26" height="26" viewBox="0 0 26 26"><g transform="rotate(-45 13 13)"><rect x="0.2" y="9.4" width="13" height="7.2" rx="3.6" fill="none" stroke="#4a5055" stroke-width="1.8"/><rect x="12.8" y="9.4" width="13" height="7.2" rx="3.6" fill="none" stroke="#4a5055" stroke-width="1.8"/><line x1="8.5" y1="13" x2="17.5" y2="13" stroke="#4a5055" stroke-width="1.8"/></g></svg>
<svg class="a" style="left:1146px;top:1018px;" width="28" height="26" viewBox="0 0 28 26"><path d="M3.8 5H12.5C12.8 7.5 14.5 9.2 17 9.5H21.8V17.7H10.3L7.2 21.8V17.7H3.8Z" fill="#ff8a00"/><g transform="translate(20.3 6.3)"><circle r="2.4" fill="#ff8a00"/><path d="M0 -3.8V3.8M-3.8 0H3.8M-2.7 -2.7L2.7 2.7M-2.7 2.7L2.7 -2.7" stroke="#ff8a00" stroke-width="1.3"/></g></svg>
<div class="a" style="left:1193px;top:601px;width:192px;height:1px;background:#e1e1e1"></div>
<div class="a" style="left:1193px;top:716px;width:192px;height:1px;background:#e1e1e1"></div>
<div class="a" style="left:1193px;top:886px;width:192px;height:1px;background:#e1e1e1"></div>
<div class="a" style="left:1193px;top:1002px;width:192px;height:1px;background:#e1e1e1"></div>
<svg class="a" style="left:1321px;top:749px;" width="20" height="28" viewBox="0 0 20 28"><path d="M0.5 0.5V23.5L5.4 19.1L9.2 26.4L13.4 24.4L9.8 17.6H17.3Z" fill="#fff" stroke="#000" stroke-width="1.1" stroke-linejoin="round"/></svg>
</body></html>
